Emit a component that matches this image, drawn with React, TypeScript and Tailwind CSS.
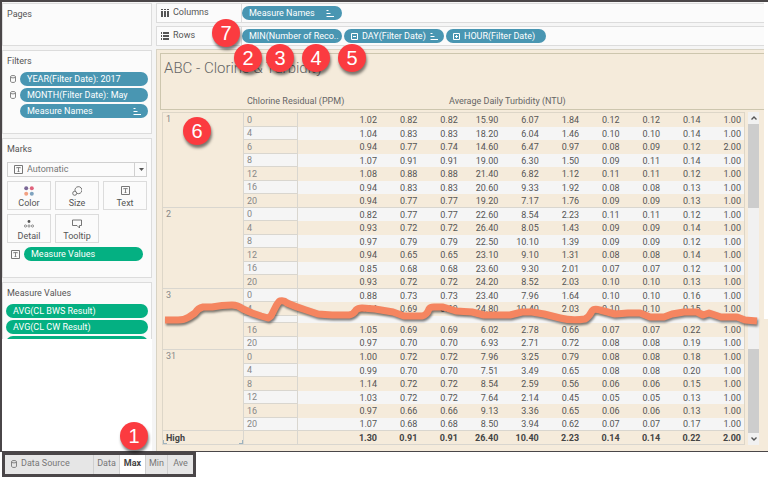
import type { ReactNode } from 'react'
import clsx from 'clsx'

type HourRow = { hour: string; values: string[] }
type DayGroup = { day: string; rows: HourRow[] }

const row = (line: string): HourRow => {
  const [hour, ...values] = line.split(' ')
  return { hour, values }
}

const GROUPS: DayGroup[] = [
  {
    day: '1',
    rows: [
      row('0 1.02 0.82 0.82 15.90 6.07 1.84 0.12 0.12 0.14 1.00'),
      row('4 1.04 0.83 0.83 18.20 6.04 1.46 0.10 0.10 0.14 1.00'),
      row('6 0.94 0.77 0.74 14.60 6.47 0.97 0.08 0.09 0.12 2.00'),
      row('8 1.07 0.91 0.91 19.00 6.30 1.50 0.09 0.11 0.14 1.00'),
      row('12 1.08 0.88 0.88 21.40 6.82 1.12 0.11 0.11 0.12 1.00'),
      row('16 0.94 0.83 0.83 20.60 9.33 1.92 0.08 0.08 0.13 1.00'),
      row('20 0.94 0.77 0.77 19.20 7.17 1.76 0.09 0.09 0.13 1.00'),
    ],
  },
  {
    day: '2',
    rows: [
      row('0 0.82 0.77 0.77 22.60 8.54 2.23 0.11 0.11 0.12 1.00'),
      row('4 0.93 0.72 0.72 26.40 8.05 1.43 0.09 0.09 0.14 1.00'),
      row('8 0.97 0.79 0.79 22.50 10.10 1.39 0.09 0.09 0.12 1.00'),
      row('12 0.94 0.65 0.65 23.10 9.10 1.31 0.08 0.08 0.14 1.00'),
      row('16 0.85 0.68 0.68 23.60 9.30 2.01 0.07 0.07 0.12 1.00'),
      row('20 0.93 0.72 0.72 24.20 8.52 2.03 0.10 0.10 0.13 1.00'),
    ],
  },
  {
    day: '3',
    rows: [
      row('0 0.88 0.73 0.73 23.40 7.96 1.64 0.10 0.10 0.16 1.00'),
      row('4 0.94 0.69 0.69 24.80 10.40 2.03 0.10 0.10 0.15 1.00'),
      { hour: '', values: Array(10).fill('') },
      row('16 1.05 0.69 0.69 6.02 2.78 0.66 0.07 0.07 0.22 1.00'),
      row('20 0.97 0.70 0.70 6.93 2.71 0.72 0.08 0.08 0.19 1.00'),
    ],
  },
  {
    day: '31',
    rows: [
      row('0 1.00 0.72 0.72 7.96 3.25 0.79 0.08 0.08 0.18 1.00'),
      row('4 0.99 0.70 0.70 7.51 3.49 0.65 0.08 0.08 0.20 1.00'),
      row('8 1.14 0.72 0.72 8.54 2.59 0.56 0.06 0.06 0.15 1.00'),
      row('12 1.03 0.72 0.72 7.64 2.14 0.45 0.05 0.05 0.13 1.00'),
      row('16 0.97 0.66 0.66 9.13 3.36 0.65 0.06 0.06 0.13 1.00'),
      row('20 1.07 0.68 0.68 8.50 3.94 0.62 0.07 0.07 0.17 1.00'),
    ],
  },
]

const TOTALS = '1.30 0.91 0.91 26.40 10.40 2.23 0.14 0.14 0.22 2.00'.split(' ')

function SortIcon() {
  return (
    <svg className="ml-auto h-[7px] w-[8px] shrink-0" viewBox="0 0 8 7" stroke="white" aria-hidden="true">
      <path d="M0.5 0.5H2.5M0.5 3.5H4.5M0.5 6.5H8" />
    </svg>
  )
}

function ExpandIcon({ open = false }: { open?: boolean }) {
  return (
    <svg className="h-[7px] w-[7px] shrink-0" viewBox="0 0 7 7" fill="none" stroke="white" aria-hidden="true">
      <path d="M0.5 0.5H6.5V6.5H0.5ZM2 3.5H5" />
      {!open && <path d="M3.5 2V5" />}
    </svg>
  )
}

function CylinderIcon() {
  return (
    <svg className="h-[8px] w-[6px] shrink-0" viewBox="0 0 6 8" fill="none" stroke="#777" strokeWidth="0.9" aria-hidden="true">
      <ellipse cx="3" cy="1.7" rx="2.5" ry="1.2" />
      <path d="M0.5 1.7V6.3C0.5 7.9 5.5 7.9 5.5 6.3V1.7" />
    </svg>
  )
}

function TextIcon() {
  return (
    <svg className="h-[9px] w-[9px] shrink-0" viewBox="0 0 9 9" fill="none" stroke="#777" aria-hidden="true">
      <path d="M0.5 0.5H8.5V8.5H0.5Z" />
      <path d="M2.6 3.2V2.6H6.4V3.2M4.5 2.6V6.5M3.6 6.5H5.4" strokeWidth="0.9" />
    </svg>
  )
}

function ColorIcon() {
  return (
    <svg className="h-[10px] w-[10px]" viewBox="0 0 10 10" aria-hidden="true">
      <circle cx="2.2" cy="2.2" r="2" fill="#7a6796" />
      <circle cx="7.8" cy="2.2" r="2" fill="#e0637c" />
      <circle cx="2.2" cy="7.8" r="2" fill="#f2a182" />
      <circle cx="7.8" cy="7.8" r="2" fill="#7fa3bf" />
    </svg>
  )
}

function SizeIcon() {
  return (
    <svg className="h-[10px] w-[10px]" viewBox="0 0 10 10" fill="none" stroke="#666" strokeWidth="0.9" aria-hidden="true">
      <path d="M3.1 5.2A3.5 3.5 0 1 1 5.1 7.4" />
      <circle cx="2.7" cy="7.3" r="2" />
    </svg>
  )
}

function DetailIcon() {
  return (
    <svg className="h-[10px] w-[10px]" viewBox="0 0 10 10" fill="none" stroke="#777" strokeWidth="0.8" aria-hidden="true">
      <circle cx="5" cy="2.5" r="1.4" fill="#555" stroke="none" />
      <circle cx="1.5" cy="7" r="1.1" />
      <circle cx="5" cy="7" r="1.1" />
      <circle cx="8.5" cy="7" r="1.1" />
    </svg>
  )
}

function TooltipIcon() {
  return (
    <svg className="h-[10px] w-[10px]" viewBox="0 0 10 10" fill="none" stroke="#666" strokeWidth="0.9" aria-hidden="true">
      <path d="M0.5 1H9.5V6.5H7.5V9L5 6.5H0.5Z" />
    </svg>
  )
}

function Pill({ children, className }: { children: ReactNode; className?: string }) {
  return (
    <button
      type="button"
      className={clsx(
        'flex h-[14px] shrink-0 items-center gap-1 rounded-full px-[7px] text-left text-[9px] leading-[14px] whitespace-nowrap text-white',
        className,
      )}
    >
      {children}
    </button>
  )
}

function Panel({ title, className, children }: { title: string; className?: string; children?: ReactNode }) {
  return (
    <section className={clsx('border border-[#dcdcdc] bg-[#fbfbfb]', className)}>
      <h2 className="pt-[4px] pl-[4px] text-[9px] leading-[12px] text-[#555]">{title}</h2>
      {children}
    </section>
  )
}

function MarkButton({ label, icon }: { label: string; icon: ReactNode }) {
  return (
    <button
      type="button"
      className="flex h-[29px] flex-col items-center justify-between border border-[#dcdcdc] pt-[4px] text-[9px] leading-[12px] text-[#555]"
    >
      {icon}
      {label}
    </button>
  )
}

function Sidebar() {
  return (
    <aside className="flex w-[150px] shrink-0 flex-col gap-[4px] pt-px">
      <Panel title="Pages" className="h-[43px]" />
      <Panel title="Filters" className="h-[84px]">
        <div className="mt-[5px] flex flex-col gap-[2px] pr-[3px] pl-[7px]">
          <div className="flex items-center gap-[4px]">
            <CylinderIcon />
            <Pill className="flex-1 bg-[#4996b2]">YEAR(Filter Date): 2017</Pill>
          </div>
          <div className="flex items-center gap-[4px]">
            <CylinderIcon />
            <Pill className="flex-1 bg-[#4996b2]">MONTH(Filter Date): May</Pill>
          </div>
          <Pill className="ml-[10px] bg-[#4996b2]">
            Measure Names
            <SortIcon />
          </Pill>
        </div>
      </Panel>
      <Panel title="Marks" className="h-[140px]">
        <div className="px-[4px] pt-[7px]">
          <label className="relative block">
            <span className="sr-only">Mark type</span>
            <select className="block h-[15px] w-full appearance-none border border-[#d0d0d0] bg-transparent pl-[19px] text-[9px] leading-[13px] text-[#777]">
              <option>Automatic</option>
            </select>
            <span className="pointer-events-none absolute inset-y-0 left-[7px] flex items-center">
              <TextIcon />
            </span>
            <span className="pointer-events-none absolute inset-y-0 right-0 flex w-[13px] items-center justify-center border-l border-[#d0d0d0]">
              <svg className="h-[3px] w-[5px]" viewBox="0 0 5 3" fill="#555" aria-hidden="true">
                <path d="M0 0H5L2.5 3Z" />
              </svg>
            </span>
          </label>
          <div className="mt-[4px] grid grid-cols-3 gap-[4px]">
            <MarkButton label="Color" icon={<ColorIcon />} />
            <MarkButton label="Size" icon={<SizeIcon />} />
            <MarkButton label="Text" icon={<TextIcon />} />
            <MarkButton label="Detail" icon={<DetailIcon />} />
            <MarkButton label="Tooltip" icon={<TooltipIcon />} />
          </div>
          <div className="mt-[4px] flex items-center gap-[4px] px-[4px]">
            <TextIcon />
            <Pill className="flex-1 bg-[#04b082]">Measure Values</Pill>
          </div>
        </div>
      </Panel>
      <Panel title="Measure Values" className="h-[57px] overflow-hidden border-b-0">
        <div className="mt-[5px] flex flex-col gap-[2px] px-[3px]">
          <Pill className="bg-[#04b082]">AVG(CL BWS Result)</Pill>
          <Pill className="bg-[#04b082]">AVG(CL CW Result)</Pill>
          <Pill className="bg-[#04b082]">{' '}</Pill>
        </div>
      </Panel>
    </aside>
  )
}

function Shelf({ label, icon, children }: { label: string; icon: ReactNode; children: ReactNode }) {
  return (
    <div className="flex h-[20px] items-center border-y border-l border-[#dcdcdc] bg-[#fbfbfb] text-[9px] text-[#555]">
      <div className="flex h-full w-[85px] shrink-0 items-center gap-[4px] border-r border-[#dcdcdc] pl-[4px]">
        {icon}
        {label}
      </div>
      <div className="flex min-w-0 gap-[2px]">{children}</div>
    </div>
  )
}

function Shelves() {
  return (
    <div className="flex flex-col gap-[3px] pt-px pb-[3px]">
      <Shelf
        label="Columns"
        icon={
          <svg className="h-[8px] w-[8px]" viewBox="0 0 8 8" fill="#555" aria-hidden="true">
            <path d="M0 0H2V1H0ZM3 0H5V1H3ZM6 0H8V1H6ZM0 2H2V8H0ZM3 2H5V8H3ZM6 2H8V8H6Z" />
          </svg>
        }
      >
        <Pill className="w-[100px] bg-[#4996b2] pr-[8px]">
          Measure Names
          <SortIcon />
        </Pill>
      </Shelf>
      <Shelf
        label="Rows"
        icon={
          <svg className="h-[8px] w-[8px]" viewBox="0 0 8 8" fill="#555" aria-hidden="true">
            <path d="M0 0H1V2H0ZM2 0H8V2H2ZM0 3H1V5H0ZM2 3H8V5H2ZM0 6H1V8H0ZM2 6H8V8H2Z" />
          </svg>
        }
      >
        <Pill className="w-[100px] bg-[#4996b2]">MIN(Number of Reco..</Pill>
        <Pill className="w-[100px] bg-[#4996b2]">
          <ExpandIcon open />
          DAY(Filter Date)
          <SortIcon />
        </Pill>
        <Pill className="w-[100px] bg-[#4996b2]">
          <ExpandIcon />
          HOUR(Filter Date)
        </Pill>
      </Shelf>
    </div>
  )
}

function ResultTable() {
  let index = -1
  return (
    <table className="w-full table-fixed border-separate border-spacing-0 border-t border-r border-l border-[#ddd6c8] text-[9px] leading-[12px] text-[#555]">
      <colgroup>
        <col className="w-[81px]" />
        <col className="w-[54px]" />
        <col className="w-[82px]" />
      </colgroup>
      <tbody>
        {GROUPS.map((group) =>
          group.rows.map((r, i) => {
            index += 1
            const first = i === 0
            const last = i === group.rows.length - 1
            const height = !r.hour ? 'h-[7px]' : index % 2 === 0 ? 'h-[14px]' : 'h-[13px]'
            const edge = last ? 'border-b border-[#d9d6cf]' : ''
            return (
              <tr key={`${group.day}-${i}`} className={clsx(height, index % 2 === 0 ? 'bg-[#f5ebdb]' : 'bg-[#f5f5f5]')}>
                {first && (
                  <th
                    rowSpan={group.rows.length}
                    scope="rowgroup"
                    className="border-r border-b border-[#d9d6cf] bg-[#f5ebdb] p-0 pl-[3px] text-left align-top font-normal text-[#888]"
                  >
                    {group.day}
                  </th>
                )}
                <th scope="row" className="border-r border-b border-[#d9d6cf] p-0 pl-[3px] text-left font-normal text-[#888]">
                  {r.hour}
                </th>
                {r.values.map((value, n) => (
                  <td key={n} className={clsx('p-0 pr-[3px] text-right', edge)}>
                    {value}
                  </td>
                ))}
              </tr>
            )
          }),
        )}
        <tr className="h-[14px] bg-[#f5ebdb] font-bold text-[#444]">
          <th scope="row" className="relative border-r border-b border-[#d9d6cf] p-0 pl-[3px] text-left">
            High
            <span className="absolute bottom-0 left-0 h-[4px] w-[4px] border-b border-l border-[#9fb3bd]" />
            <span className="absolute right-0 bottom-0 h-[4px] w-[4px] border-r border-b border-[#9fb3bd]" />
          </th>
          <td className="border-r border-b border-[#d9d6cf] p-0" />
          {TOTALS.map((value, n) => (
            <td key={n} className="border-b border-[#d9d6cf] p-0 pr-[3px] text-right">
              {value}
            </td>
          ))}
        </tr>
      </tbody>
    </table>
  )
}

function Scrollbar() {
  return (
    <div className="ml-[3px] flex w-[11px] shrink-0 flex-col bg-[#f1f1f1]">
      <button type="button" aria-label="Scroll up" className="flex h-[12px] items-center justify-center">
        <svg className="h-[4px] w-[6px]" viewBox="0 0 6 4" fill="none" stroke="#555" strokeWidth="1.4" aria-hidden="true">
          <path d="M0.5 3.5L3 1L5.5 3.5" />
        </svg>
      </button>
      <div className="h-[84px] bg-[#cdcdcd]" />
      <div className="flex-1" />
      <div className="h-[84px] bg-[#cdcdcd]" />
      <button type="button" aria-label="Scroll down" className="flex h-[12px] items-center justify-center">
        <svg className="h-[4px] w-[6px]" viewBox="0 0 6 4" fill="none" stroke="#555" strokeWidth="1.4" aria-hidden="true">
          <path d="M0.5 0.5L3 3L5.5 0.5" />
        </svg>
      </button>
    </div>
  )
}

function TornEdge() {
  return (
    <svg
      className="pointer-events-none absolute top-[246px] left-[5px] h-[34px] w-[600px] overflow-visible"
      viewBox="162 296 600 34"
      fill="none"
      aria-hidden="true"
    >
      <path
        className="drop-shadow-[1px_2px_1px_rgba(0,0,0,0.5)]"
        d="M165 320H178Q184 320 189 317L195 313Q198 308 203 307L212 307Q222 305 232 305Q238 305 243 309L252 313L261 316L268 318L271 316L275 308Q278 302 280 301Q284 300 287 303Q296 307 306 310L318 314L332 315H349Q354 314 356 310Q358 308 362 308L375 309L393 312L404 316H422Q427 315 429 309Q430 307 434 307H443L456 311L472 312L484 315H510L522 312L532 312L544 314L560 318Q572 321 585 319Q589 317 592 311Q594 308 600 310L615 314L628 313L640 313L650 317H664L672 314L684 312L697 312L703 315L709 313L721 317H737L745 320L757 321"
        stroke="#f58560"
        strokeWidth="7"
        strokeLinejoin="round"
      />
    </svg>
  )
}

function Sheet() {
  return (
    <div className="flex flex-1">
      <main className="relative min-w-0 flex-1 border-t border-l border-[#d8d3c4] bg-[#f5ebdb] pt-[3px] pb-[6px] pl-[3px]">
        <header className="flex h-[57px] flex-col justify-between border-y border-l border-[#cdc6ae] pt-[4px] pb-[2px] text-[#666]">
          <h1 className="pl-[3px] text-[15px] leading-[20px] font-light">ABC - Clorine &amp; Turbidity</h1>
          <div className="grid grid-cols-3 text-[9px] leading-[12px]">
            <span className="pl-[86px] whitespace-nowrap">Chlorine Residual (PPM)</span>
            <span className="pl-[87px] whitespace-nowrap">Average Daily Turbidity (NTU)</span>
          </div>
        </header>
        <div className="mt-[2px] flex pr-[5px] pl-[2px]">
          <div className="min-w-0 flex-1">
            <ResultTable />
          </div>
          <Scrollbar />
        </div>
        <TornEdge />
      </main>
      <div className="flex w-[4px] shrink-0 flex-col bg-white">
        <div className="h-[270px]" />
        <div className="flex-1 bg-[#f5ebdb]" />
      </div>
    </div>
  )
}

function SheetTabs() {
  const tab = 'flex items-center border-r border-[#cfcfcf] pb-[2px]'
  return (
    <nav
      aria-label="Sheets"
      className="ml-[2px] flex h-[25px] w-fit border-[3px] border-[#4a4648] bg-[#e6e6e6] text-[9px] text-[#777]"
    >
      <button type="button" className={clsx(tab, 'w-[89px] gap-[4px] pl-[6px]')}>
        <CylinderIcon />
        Data Source
      </button>
      <button type="button" className={clsx(tab, 'w-[26px] justify-center')}>Data</button>
      <button type="button" aria-current="page" className={clsx(tab, 'w-[26px] justify-center bg-white font-bold text-[#444]')}>
        Max
      </button>
      <button type="button" className={clsx(tab, 'w-[22px] justify-center')}>Min</button>
      <button type="button" className="flex w-[25px] items-center justify-center pb-[2px]">Ave</button>
    </nav>
  )
}

function Callout({ n, className }: { n: number; className: string }) {
  return (
    <span
      className={clsx(
        'absolute flex h-[28px] w-[28px] items-center justify-center rounded-full bg-[#fb3b40] font-["Liberation_Sans",sans-serif] text-[20px] leading-[28px] text-white shadow-[1px_3px_3px_rgba(0,0,0,0.5)]',
        className,
      )}
    >
      {n}
    </span>
  )
}

export default function App() {
  return (
    <div className='relative bg-white font-["Roboto",sans-serif]'>
      <div className="flex border-t-2 border-b border-l-2 border-[#4a4648]">
        <div className="flex w-[154px] shrink-0 flex-col">
          <div className="h-[335px] bg-[#f5f5f5]">
            <Sidebar />
          </div>
          <div className="ml-[150px] flex-1 bg-[#f5f5f5]" />
        </div>
        <div className="flex min-w-0 flex-1 flex-col">
          <div className="mr-[4px] bg-[#f5f5f5]">
            <Shelves />
          </div>
          <Sheet />
        </div>
      </div>
      <SheetTabs />
      <Callout n={7} className="top-[19px] left-[212px]" />
      <Callout n={2} className="top-[44px] left-[234px]" />
      <Callout n={3} className="top-[44px] left-[266px]" />
      <Callout n={4} className="top-[44px] left-[302px]" />
      <Callout n={5} className="top-[44px] left-[338px]" />
      <Callout n={6} className="top-[117px] left-[183px]" />
      <Callout n={1} className="top-[422px] left-[120px]" />
    </div>
  )
}
